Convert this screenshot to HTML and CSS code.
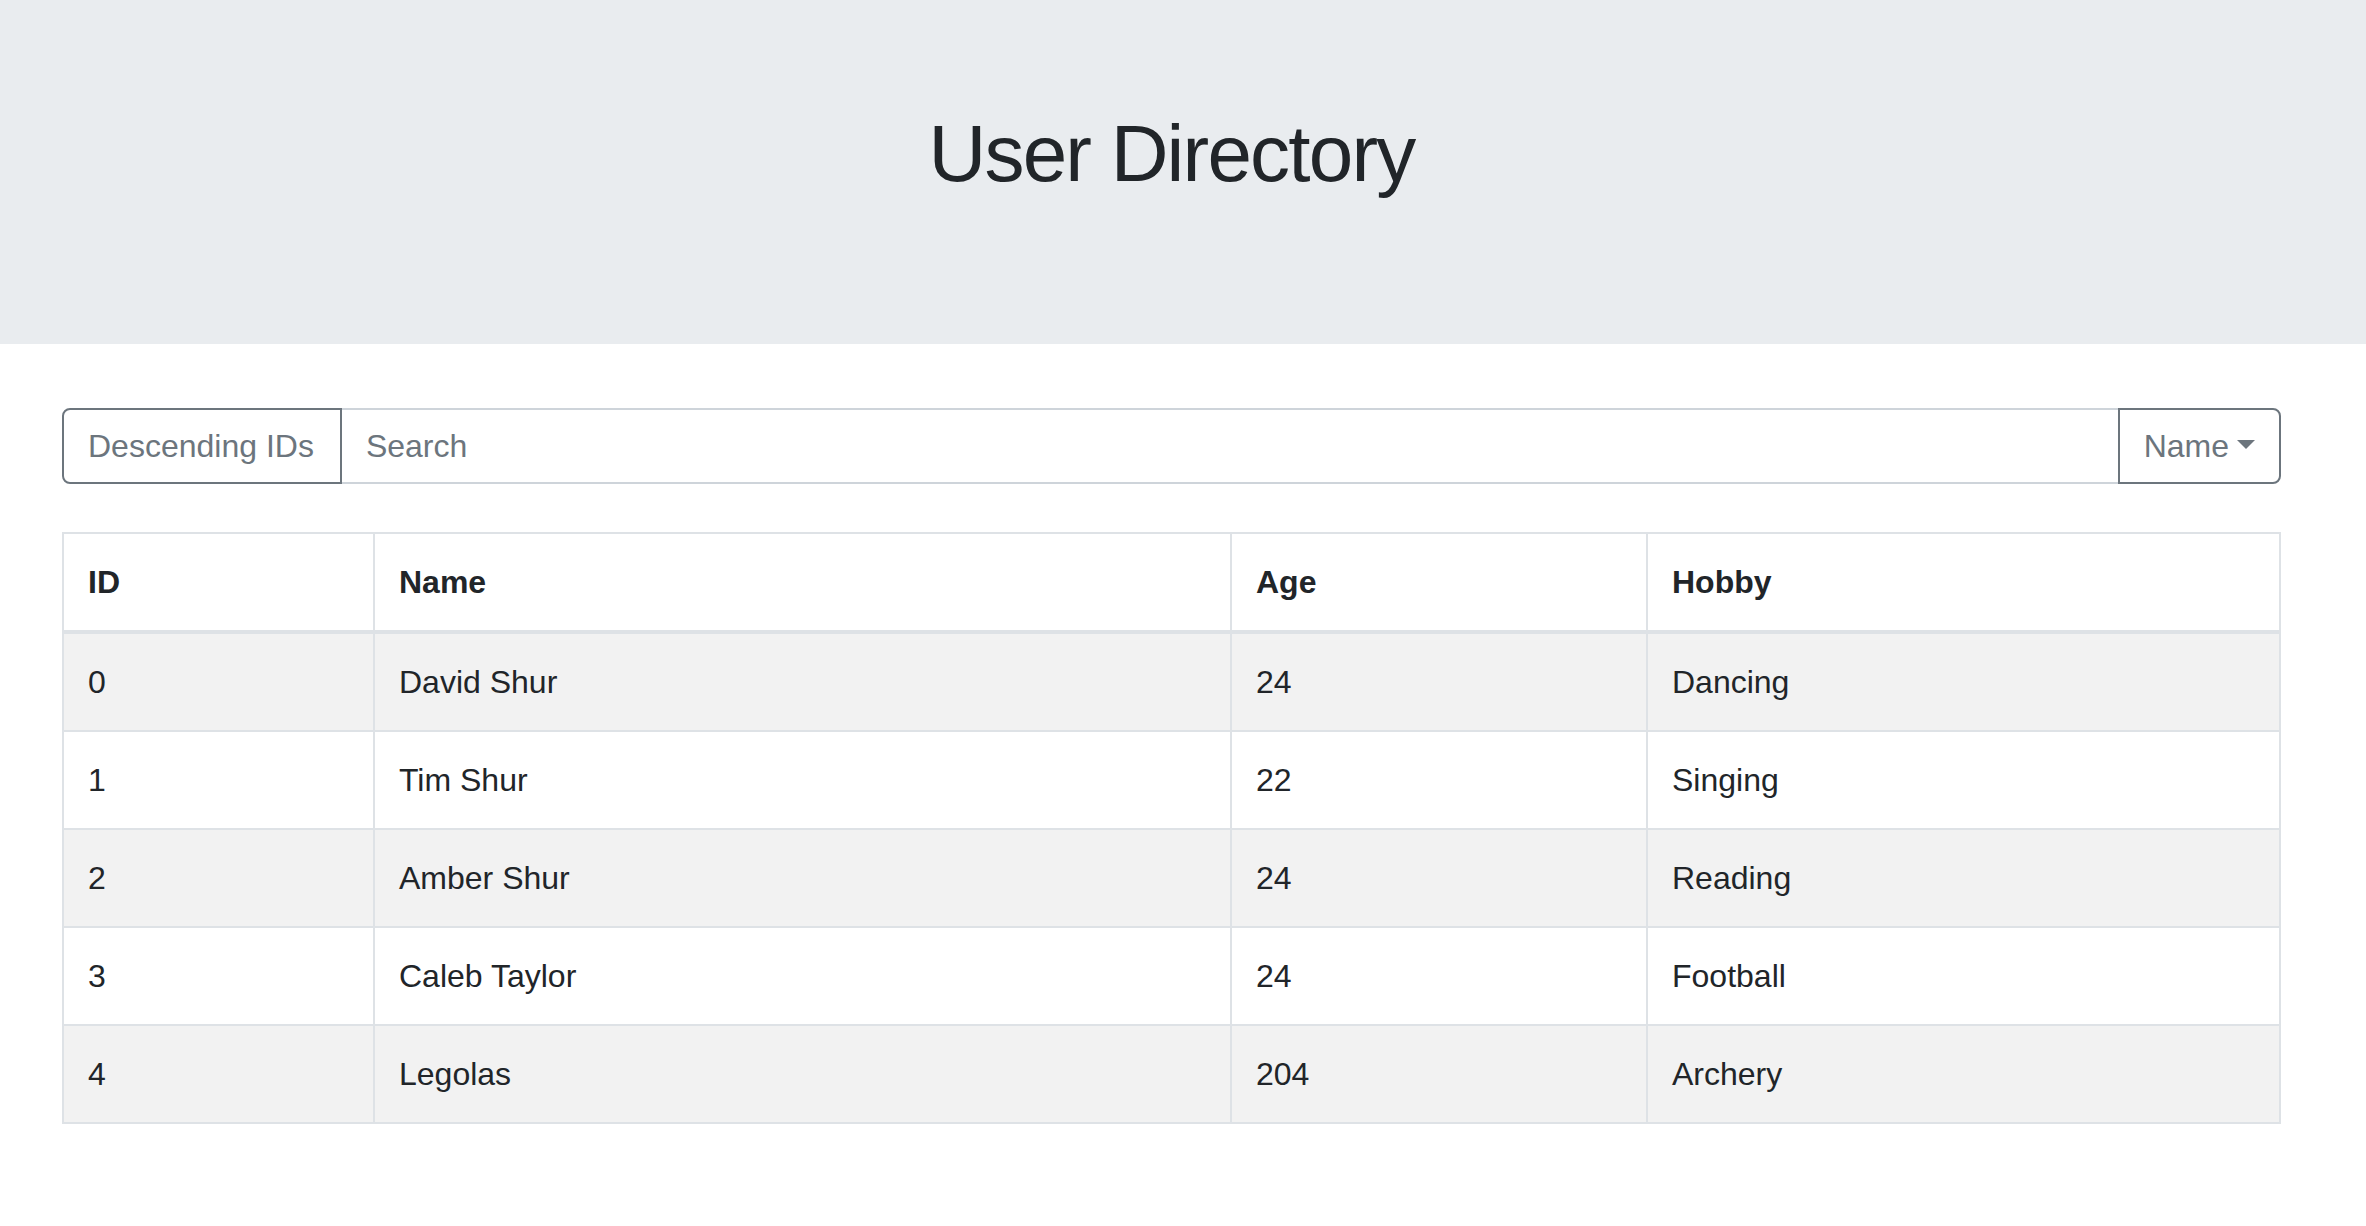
FILE: index.html
```html
<!DOCTYPE html>
<html lang="en">
<head>
<meta charset="utf-8">
<title>User Directory</title>
<link rel="stylesheet" href="styles.css">
</head>
<body>
<header class="jumbotron">
  <div class="container">
    <h1 class="title">User Directory</h1>
  </div>
</header>
<main class="container">
  <div class="input-group">
    <button class="btn btn-left" type="button">Descending IDs</button>
    <input class="search" type="text" placeholder="Search">
    <button class="btn btn-right" type="button">Name<span class="caret"></span></button>
  </div>
  <table class="users">
    <colgroup>
      <col class="col-id">
      <col class="col-name">
      <col class="col-age">
      <col class="col-hobby">
    </colgroup>
    <thead>
      <tr><th>ID</th><th>Name</th><th>Age</th><th>Hobby</th></tr>
    </thead>
    <tbody>
      <tr><td>0</td><td>David Shur</td><td>24</td><td>Dancing</td></tr>
      <tr><td>1</td><td>Tim Shur</td><td>22</td><td>Singing</td></tr>
      <tr><td>2</td><td>Amber Shur</td><td>24</td><td>Reading</td></tr>
      <tr><td>3</td><td>Caleb Taylor</td><td>24</td><td>Football</td></tr>
      <tr><td>4</td><td>Legolas</td><td>204</td><td>Archery</td></tr>
    </tbody>
  </table>
</main>
</body>
</html>
```
FILE: styles.css
```css
* { box-sizing: border-box; }
html, body { margin: 0; padding: 0; }
body {
  font-family: "Liberation Sans", Arial, sans-serif;
  font-size: 32px;
  line-height: 48px;
  color: #212529;
  background: #ffffff;
}
.jumbotron {
  background: #e9ecef;
  height: 344px;
  padding-top: 106px;
  margin-bottom: 64px;
}
.container {
  margin: 0 85px 0 62px;
}
.title {
  margin: 0;
  font-size: 80px;
  line-height: 96px;
  font-weight: 400;
  text-align: center;
  letter-spacing: -1.8px;
}
.input-group {
  display: flex;
  height: 76px;
  margin-bottom: 48px;
}
.btn {
  font: inherit;
  line-height: 48px;
  color: #6c757d;
  background: transparent;
  border: 2px solid #6c757d;
  padding: 12px 24px;
  position: relative;
  z-index: 2;
  white-space: nowrap;
  cursor: pointer;
}
.btn-left { border-radius: 8px 0 0 8px; padding-right: 26px; }
.btn-right { border-radius: 0 8px 8px 0; margin-left: -2px; }
.search {
  flex: 1;
  min-width: 0;
  font: inherit;
  line-height: 48px;
  height: 76px;
  padding: 12px 24px;
  border: 2px solid #ced4da;
  border-radius: 0;
  margin-left: -2px;
  color: #495057;
  background: #fff;
  outline: none;
}
.search::placeholder { color: #6c757d; opacity: 1; }
.caret {
  display: inline-block;
  width: 0;
  height: 0;
  margin-left: 8px;
  vertical-align: 8px;
  border-top: 9.6px solid currentColor;
  border-left: 9.6px solid transparent;
  border-right: 9.6px solid transparent;
}
.users {
  width: 100%;
  border-collapse: collapse;
  table-layout: fixed;
}
.col-id { width: 311px; }
.col-name { width: 857px; }
.col-age { width: 416px; }
.users th, .users td {
  border: 2px solid #dee2e6;
  padding: 24px;
  text-align: left;
  vertical-align: top;
}
.users thead th {
  border-bottom-width: 4px;
  font-weight: 700;
}
.users tbody tr:nth-child(odd) { background: #f2f2f2; }
```
